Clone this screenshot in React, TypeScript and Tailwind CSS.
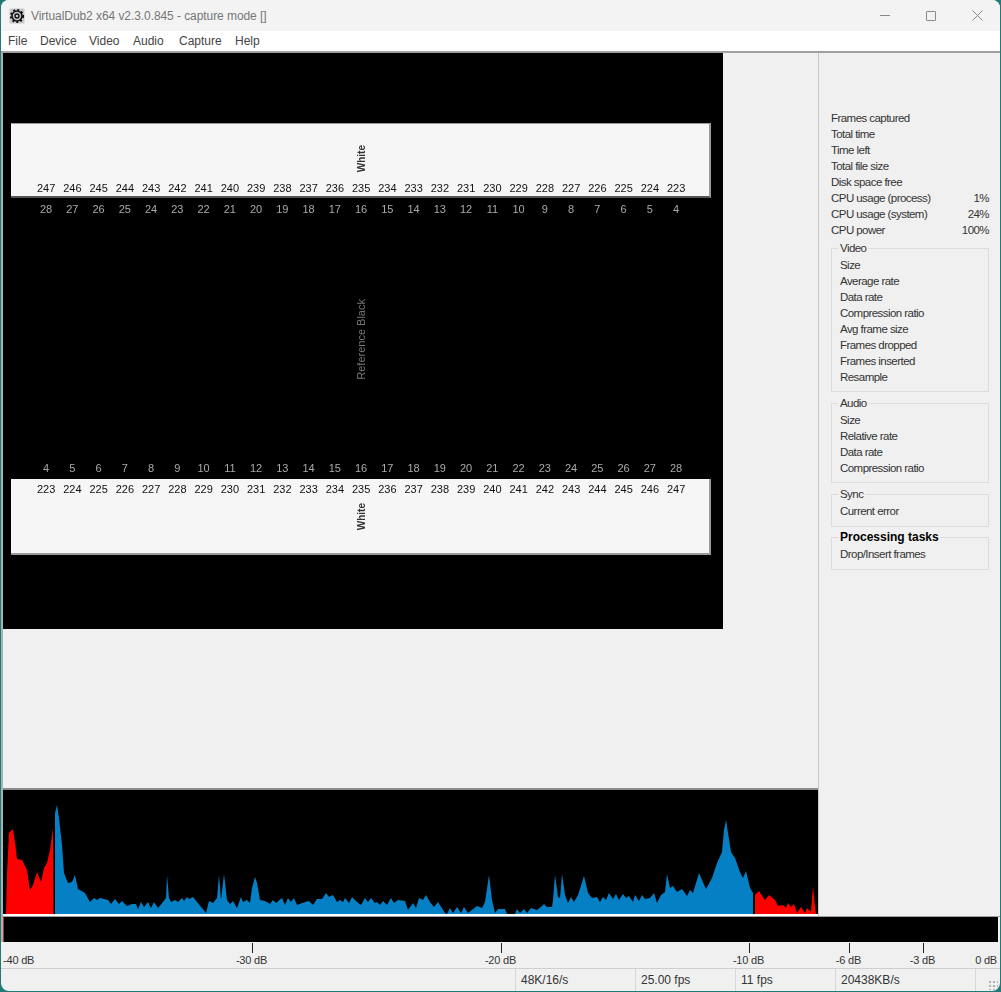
import React from "react";

const FONT = "font-['Liberation_Sans',Arial,sans-serif]";

const redLeft = "6,914 7,873 9,833 13,829 16,850 17,859 22,860 27,870 30,890 33,885 37,872 41,882 44,868 47,863 50,850 53,828 53.5,914";
const blue =
  "55,914 55,813 57,805 59,818 62,845 64,873 68,883 72,882 75,875 78,889 85,893 90,902 94,898 97,900 100,898 108,900 111,904 115,899 119,904 122,901 127,906 132,904 136,904 138,909 141,902 144,907 148,902 151,908 154,902 158,908 163,902 166,898 167,875 169,898 171,902 175,900 178,902 182,898 184,901 187,897 189,899 193,897 197,902 202,908 206,913 209,901 213,903 217,898 219,875 221,900 224,874 227,900 230,904 233,901 237,908 241,897 243,902 247,900 250,903 252,888 255,877 257,883 260,900 265,901 270,904 273,900 276,903 282,898 285,905 288,898 291,902 294,898 297,905 305,902 309,901 313,905 317,899 322,899 326,893 329,897 333,895 337,902 340,900 343,902 345,898 349,903 352,897 357,902 361,905 365,898 368,902 371,898 375,903 377,902 380,905 383,901 387,905 391,898 394,903 398,900 405,901 408,910 413,903 416,908 419,898 423,900 426,895 430,902 434,907 438,902 445,913 447,914 450,908 453,913 457,907 461,913 464,907 468,913 477,906 482,908 485,902 489,875 492,900 495,913 498,909 505,909 507,914 515,914 517,909 520,913 524,909 527,913 531,908 537,910 542,906 544,904 547,907 552,907 553,900 555,875 558,897 560,898 562,874 565,895 568,903 571,897 574,902 578,895 584,876 588,893 592,898 597,897 600,902 603,897 606,900 609,893 613,899 616,894 619,900 623,894 626,898 629,896 633,902 635,895 639,901 642,895 645,899 650,898 654,893 657,903 661,895 665,892 667,874 670,888 673,886 677,892 682,889 687,896 690,890 693,893 699,873 706,889 712,878 717,863 722,852 724,830 726,820 728,833 731,852 735,858 740,872 743,878 746,871 750,888 753,893 753,914";
const redRight = "755,914 755,895 759,891 765,900 769,895 775,900 778,906 783,905 786,908 788,903 791,907 794,904 797,913 801,907 805,913 807,908 811,912 813,886 815,907 816,914";

const topRow = Array.from({ length: 25 }, (_, i) => 247 - i);
const lowerTop = Array.from({ length: 25 }, (_, i) => 28 - i);
const upperBottom = Array.from({ length: 25 }, (_, i) => 4 + i);
const lowerBottom = Array.from({ length: 25 }, (_, i) => 223 + i);

const NumberRow = ({ values, className }: { values: number[]; className: string }) => (
  <div className={`grid grid-cols-[repeat(25,26.25px)] pl-[22px] text-center text-[11px] leading-[14px] ${className}`}>
    {values.map((v) => (
      <span key={v}>{v}</span>
    ))}
  </div>
);

const Row = ({ label, value }: { label: string; value?: string }) => (
  <div className="flex h-4 items-center justify-between pt-[2px]">
    <span>{label}</span>
    {value && <span>{value}</span>}
  </div>
);

const Group = ({ title, rows, bold, className }: { title: string; rows: string[]; bold?: boolean; className: string }) => (
  <fieldset className={`border border-[#dcdcdc] pt-px pl-2 ${className}`}>
    <legend className={`-ml-[2px] h-4 px-[2px] leading-4 ${bold ? "text-[12px] font-bold tracking-normal text-black" : ""}`}>{title}</legend>
    {rows.map((r) => (
      <Row key={r} label={r} />
    ))}
  </fieldset>
);

const AppIcon = () => (
  <svg width="16" height="16" viewBox="0 0 16 16" className="mr-[6px]">
    <rect x="0.5" y="0.5" width="15" height="15" rx="1" fill="#c9c9c9" />
    <circle cx="8" cy="8" r="5" fill="none" stroke="#111" strokeWidth="1.6" />
    <circle cx="8" cy="8" r="6.2" fill="none" stroke="#111" strokeWidth="1.8" strokeDasharray="2 2.1" />
    <circle cx="8" cy="8" r="2" fill="none" stroke="#111" strokeWidth="1.4" />
  </svg>
);

const ticks = [
  { x: 252, label: "-30 dB" },
  { x: 501, label: "-20 dB" },
  { x: 749, label: "-10 dB" },
  { x: 849, label: "-6 dB" },
  { x: 923, label: "-3 dB" },
];

export default function App() {
  return (
    <div className={`h-[992px] w-[1001px] overflow-hidden bg-[#1f7a78] px-px ${FONT}`}>
      <div className="flex h-[991px] flex-col overflow-hidden rounded-lg bg-[#f0f0f0] text-[12px] text-[#222]">
        {/* Title bar */}
        <div className="flex h-[31px] shrink-0 items-center bg-[#f3f3f3] pl-2">
          <AppIcon />
          <span className="tracking-[-0.07px] text-[#777]">VirtualDub2 x64 v2.3.0.845 - capture mode []</span>
          <div className="ml-auto flex h-full items-center text-[#888]">
            <div className="flex h-full w-[46px] items-center justify-center">
              <div className="h-px w-[10px] bg-[#888]"></div>
            </div>
            <div className="flex h-full w-[46px] items-center justify-center">
              <div className="h-[10px] w-[10px] rounded-[1px] border border-[#888]"></div>
            </div>
            <div className="flex h-full w-[46px] items-center justify-center">
              <svg width="11" height="11" viewBox="0 0 11 11">
                <path d="M0.5 0.5 L10.5 10.5 M10.5 0.5 L0.5 10.5" stroke="#888" strokeWidth="1" fill="none" />
              </svg>
            </div>
          </div>
        </div>

        {/* Menu */}
        <div className="flex h-5 shrink-0 items-center bg-white pl-[7px] text-[#444]">
          <span className="w-8">File</span>
          <span className="w-[49px]">Device</span>
          <span className="w-[44px]">Video</span>
          <span className="w-[46px]">Audio</span>
          <span className="w-[56px]">Capture</span>
          <span>Help</span>
        </div>
        <div className="h-[2px] shrink-0 bg-[#a0a0a0]"></div>

        <div className="flex h-[863px] shrink-0">
          {/* Capture preview + waveform */}
          <div className="flex w-[817px] shrink-0 flex-col border-l-2 border-[#a8b2b2]">
            <div className="h-[735px] shrink-0">
              <div className="h-[576px] w-[720px] bg-black pt-[70px] pr-3 pl-2 blur-[0.5px]">
                <div className="relative h-[75px] border-t border-b-2 border-r-2 border-t-[#999] border-b-[#555] border-r-[#999] bg-[#f6f6f6]">
                  <div className="absolute left-[346px] top-[21px] rotate-180 text-[10px] leading-[10px] font-bold text-[#333] [writing-mode:vertical-rl]">White</div>
                  <NumberRow values={topRow} className="pt-[57px] font-medium text-[#111]" />
                </div>
                <NumberRow values={lowerTop} className="pt-[4px] text-[#aaa]" />
                <div className="flex h-[164px] items-end justify-start pl-[345px]">
                  <div className="rotate-180 text-[11px] leading-[11px] text-[#777] [writing-mode:vertical-rl]">Reference Black</div>
                </div>
                <NumberRow values={upperBottom} className="pt-[81px] text-[#aaa]" />
                <div className="relative mt-[4px] h-[76px] border-b-2 border-r-2 border-b-[#999] border-r-[#999] bg-[#f6f6f6]">
                  <NumberRow values={lowerBottom} className="pt-[3px] font-medium text-[#111]" />
                  <div className="absolute left-[346px] top-[24px] rotate-180 text-[10px] leading-[10px] font-bold text-[#333] [writing-mode:vertical-rl]">White</div>
                </div>
              </div>
            </div>
            <div className="h-[2px] shrink-0 bg-[#8a8a8a]"></div>
            <div className="h-[124px] shrink-0 bg-black">
              <svg width="815" height="124" viewBox="3 790 815 124" className="block">
                <polygon points={redLeft} fill="#ff0000" />
                <polygon points={blue} fill="#0680c4" />
                <polygon points={redRight} fill="#ff0000" />
              </svg>
            </div>
            <div className="h-[2px] shrink-0 bg-white"></div>
          </div>

          {/* Status panel */}
          <div className="flex-1 border-l border-[#c8c8c8] pt-[57px] pr-[11px] pl-3 text-[11.5px] tracking-[-0.55px] text-[#333]">
            <Row label="Frames captured" />
            <Row label="Total time" />
            <Row label="Time left" />
            <Row label="Total file size" />
            <Row label="Disk space free" />
            <Row label="CPU usage (process)" value="1%" />
            <Row label="CPU usage (system)" value="24%" />
            <Row label="CPU power" value="100%" />
            <Group
              className="mt-[2px] pb-[6px]"
              title="Video"
              rows={["Size", "Average rate", "Data rate", "Compression ratio", "Avg frame size", "Frames dropped", "Frames inserted", "Resample"]}
            />
            <Group className="mt-[3px] pb-[6px]" title="Audio" rows={["Size", "Relative rate", "Data rate", "Compression ratio"]} />
            <Group className="mt-[3px] pb-[7px]" title="Sync" rows={["Current error"]} />
            <Group className="mt-[2px] pb-[7px]" title="Processing tasks" bold rows={["Drop/Insert frames"]} />
          </div>
        </div>

        <div className="h-px shrink-0 bg-[#a0a0a0]"></div>

        {/* Level meter */}
        <div className="flex h-[25px] shrink-0 border-l-2 border-[#a8b2b2] pr-[2px]">
          <div className="h-full w-px bg-[#c03030]"></div>
          <div className="h-full flex-1 bg-black"></div>
        </div>

        {/* dB ruler */}
        <div className="relative h-[26px] shrink-0 text-[11px] leading-[14px] tracking-[-0.2px] text-[#333]">
          <span className="absolute left-[2px] top-[11px]">-40 dB</span>
          {ticks.map((t) => (
            <div key={t.x} className="absolute top-0 flex w-10 -translate-x-1/2 flex-col items-center" style={{ left: t.x - 1 }}>
              <div className="mt-[1px] h-[10px] w-px bg-[#222]"></div>
              <span className="-ml-px whitespace-nowrap">{t.label}</span>
            </div>
          ))}
          <span className="absolute right-[3px] top-[11px]">0 dB</span>
        </div>
        <div className="h-px shrink-0 bg-[#cfcfcf]"></div>

        {/* Status bar */}
        <div className="flex h-[22px] shrink-0 items-center text-[#333]">
          <div className="h-full w-[515px] border-r border-[#d8d8d8]"></div>
          <div className="w-[120px] border-r border-[#d8d8d8] pl-[5px] leading-[22px]">48K/16/s</div>
          <div className="w-[100px] border-r border-[#d8d8d8] pl-[5px] leading-[22px]">25.00 fps</div>
          <div className="w-[100px] border-r border-[#d8d8d8] pl-[5px] leading-[22px]">11 fps</div>
          <div className="w-[140px] border-r border-[#d8d8d8] pl-[5px] leading-[22px]">20438KB/s</div>
          <div className="ml-auto mt-auto mb-px mr-[2px] h-[10px] w-[10px] bg-[radial-gradient(#b0b0b0_1px,transparent_1px)] bg-[length:4px_4px]"></div>
        </div>
      </div>
    </div>
  );
}
